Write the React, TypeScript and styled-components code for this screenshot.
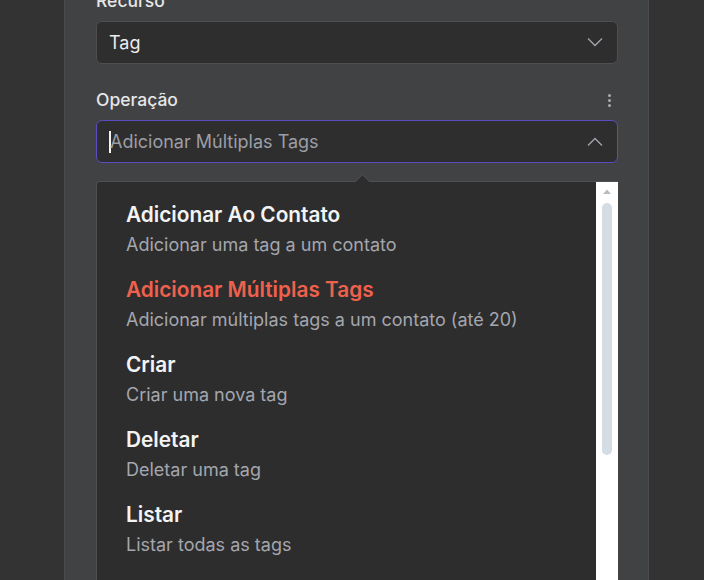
import styled, { createGlobalStyle } from "styled-components";

const GlobalStyle = createGlobalStyle`
  html, body {
    margin: 0;
    padding: 0;
    height: 100%;
    overflow: hidden;
    background: #333334;
    font-family: Inter, "Noto Sans", sans-serif;
    -webkit-font-smoothing: antialiased;
  }
`;

const Page = styled.div`
  display: flex;
  padding-left: 64px;
  height: 100vh;
`;

const Panel = styled.div`
  box-sizing: border-box;
  width: 585px;
  flex-shrink: 0;
  border-left: 1px solid #4c4c4f;
  border-right: 1px solid #4c4c4f;
  background: #414244;
  padding: 0 30px 0 31px;
  margin-top: -9px;
  display: flex;
  flex-direction: column;
  gap: 26px;
`;

const Field = styled.div`
  display: flex;
  flex-direction: column;
  gap: 10px;
  position: relative;
`;

const LabelRow = styled.div`
  display: flex;
  align-items: center;
  justify-content: space-between;
  height: 20px;
`;

const Label = styled.span`
  font-size: 17.5px;
  font-weight: 500;
  line-height: 20px;
  color: #e6e6e8;
`;

const Kebab = styled.button`
  display: flex;
  flex-direction: column;
  align-items: center;
  gap: 2px;
  width: 16px;
  padding: 0;
  margin-right: 1px;
  border: 0;
  background: none;

  span {
    width: 3px;
    height: 3px;
    border-radius: 50%;
    background: #a9abb0;
  }
`;

const Select = styled.div<{ $open?: boolean }>`
  position: relative;
  height: 43px;
  box-sizing: border-box;
  display: flex;
  align-items: center;
  justify-content: space-between;
  padding: 0 14px 0 12px;
  background: #2e2e2f;
  border: 1px solid ${(p) => (p.$open ? "#5a4cc2" : "#4e4e51")};
  border-radius: 6px;
`;

const Value = styled.span`
  font-size: 18px;
  line-height: 22px;
  color: #ececee;
`;

const Placeholder = styled.span`
  display: flex;
  align-items: center;
  font-size: 18px;
  line-height: 22px;
  color: #9c9ea5;

  &::before {
    content: "";
    width: 2px;
    height: 22px;
    background: #f2f2f2;
    margin-right: -1px;
  }
`;

const Dropdown = styled.div`
  position: absolute;
  top: calc(100% + 19px);
  left: -1px;
  right: -1px;
  height: 430px;
  display: flex;
  background: #2d2d2e;
  border: 1px solid #505053;
  border-right: 0;
  border-radius: 4px 0 0 0;

  &::before {
    content: "";
    position: absolute;
    top: -6px;
    left: 260px;
    width: 10px;
    height: 10px;
    background: #2d2d2e;
    border-top: 1px solid #505053;
    border-left: 1px solid #505053;
    transform: rotate(45deg);
  }
`;

const OptionList = styled.ul`
  flex: 1;
  list-style: none;
  margin: 0;
  padding: 8px 0 0;
`;

const Option = styled.li`
  display: flex;
  flex-direction: column;
  gap: 5px;
  padding: 12px 29px 8px;
`;

const OptionTitle = styled.span<{ $active?: boolean }>`
  font-size: 20.8px;
  font-weight: 600;
  line-height: 26px;
  color: ${(p) => (p.$active ? "#ef614c" : "#f3f3f4")};
`;

const OptionHint = styled.span`
  font-size: 18px;
  line-height: 24px;
  color: #a4a6ad;
`;

const Scrollbar = styled.div`
  width: 22px;
  flex-shrink: 0;
  background: #ffffff;
  display: flex;
  flex-direction: column;
  align-items: center;
  padding-top: 7px;
  gap: 9px;
`;

const ScrollThumb = styled.div`
  width: 10px;
  height: 252px;
  border-radius: 5px;
  background: #d4dce4;
`;

const Chevron = ({ up }: { up?: boolean }) => (
  <svg width="16" height="9" viewBox="0 0 16 9" fill="none">
    <path
      d={up ? "M1 8.5L8 1.5L15 8.5" : "M1 0.5L8 7.5L15 0.5"}
      stroke="#a3a5ab"
      strokeWidth="1.3"
    />
  </svg>
);

const options = [
  { title: "Adicionar Ao Contato", hint: "Adicionar uma tag a um contato" },
  {
    title: "Adicionar Múltiplas Tags",
    hint: "Adicionar múltiplas tags a um contato (até 20)",
    active: true,
  },
  { title: "Criar", hint: "Criar uma nova tag" },
  { title: "Deletar", hint: "Deletar uma tag" },
  { title: "Listar", hint: "Listar todas as tags" },
];

export default function App() {
  return (
    <>
      <GlobalStyle />
      <Page>
        <Panel>
          <Field>
            <LabelRow>
              <Label>Recurso</Label>
            </LabelRow>
            <Select>
              <Value>Tag</Value>
              <Chevron />
            </Select>
          </Field>

          <Field>
            <LabelRow>
              <Label>Operação</Label>
              <Kebab aria-label="Opções">
                <span />
                <span />
                <span />
              </Kebab>
            </LabelRow>
            <Select $open>
              <Placeholder>Adicionar Múltiplas Tags</Placeholder>
              <Chevron up />
              <Dropdown>
                <OptionList>
                  {options.map((o) => (
                    <Option key={o.title}>
                      <OptionTitle $active={o.active}>{o.title}</OptionTitle>
                      <OptionHint>{o.hint}</OptionHint>
                    </Option>
                  ))}
                </OptionList>
                <Scrollbar>
                  <svg width="8" height="5" viewBox="0 0 8 5">
                    <path d="M0 5L4 0.5L8 5Z" fill="#b8bcc2" />
                  </svg>
                  <ScrollThumb />
                </Scrollbar>
              </Dropdown>
            </Select>
          </Field>
        </Panel>
      </Page>
    </>
  );
}
